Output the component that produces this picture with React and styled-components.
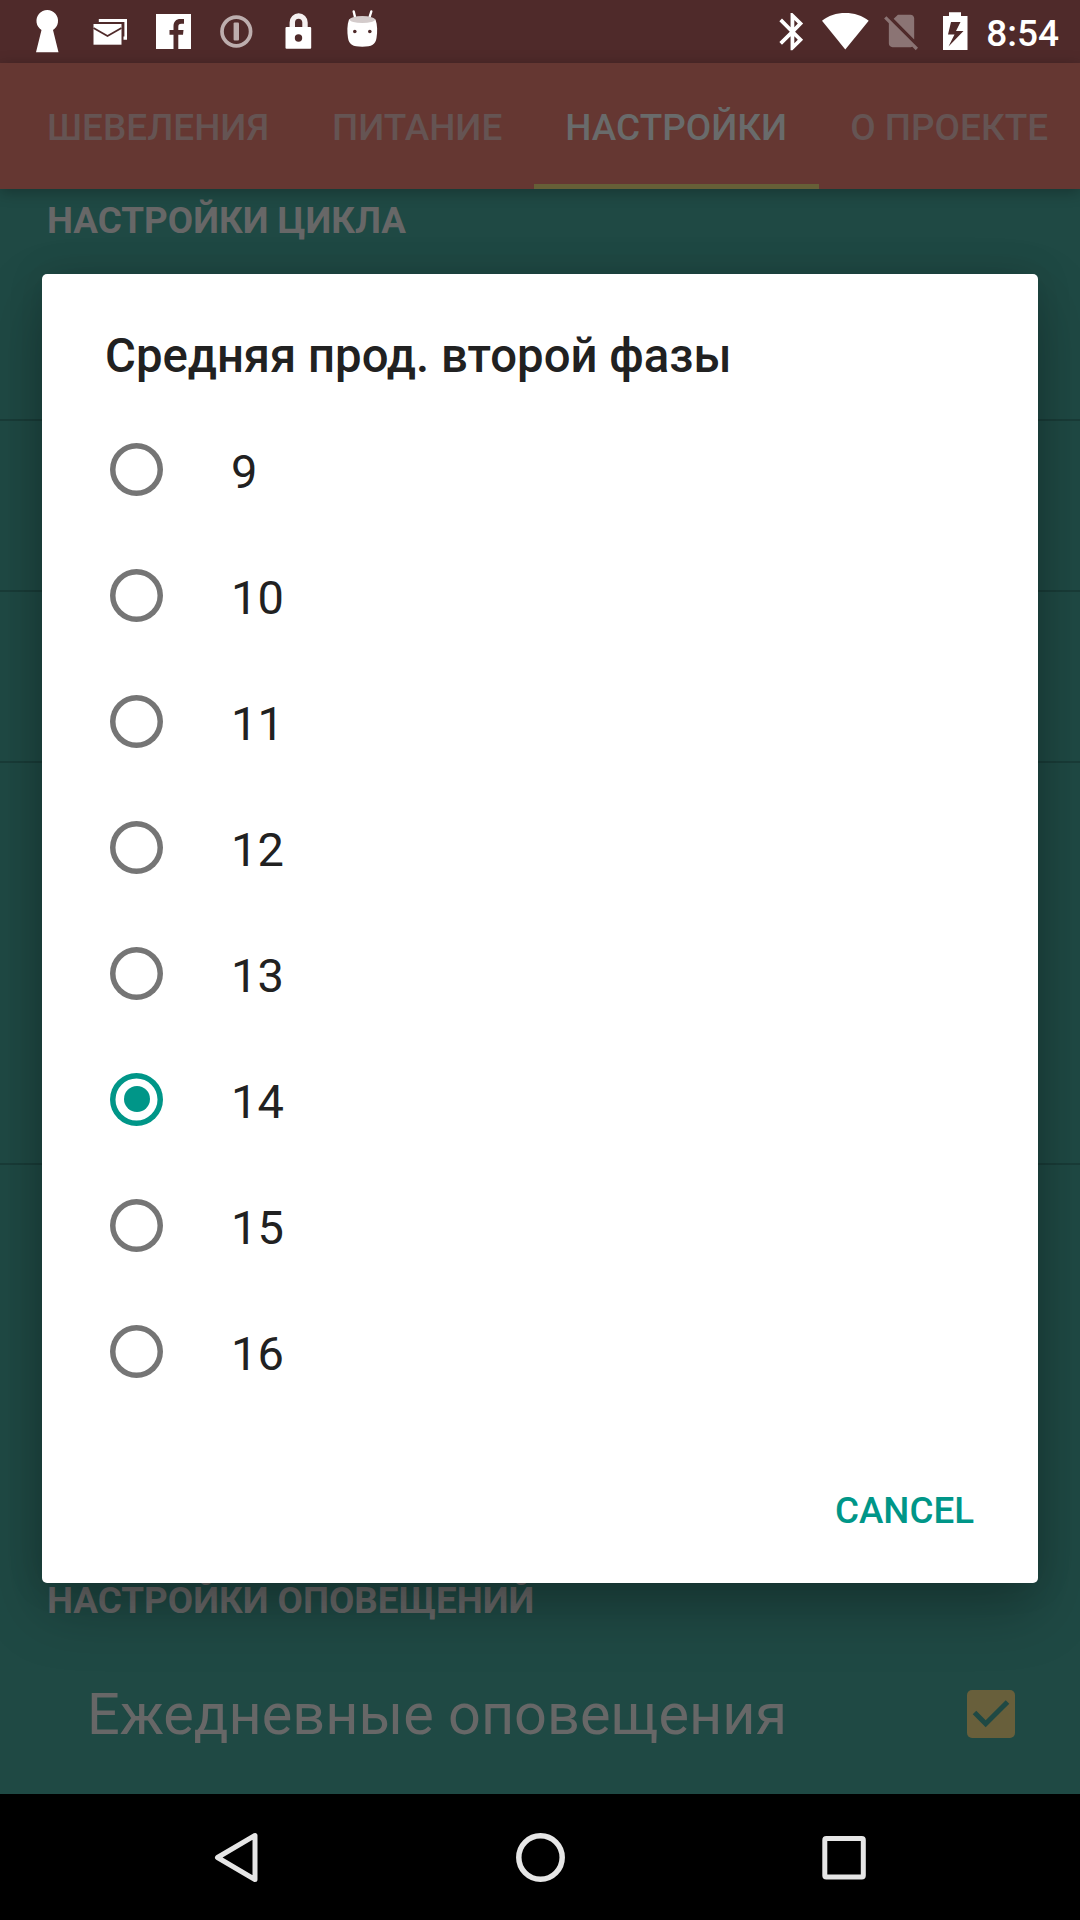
import React from "react";
import styled, { createGlobalStyle } from "styled-components";

const GlobalStyle = createGlobalStyle`
  * { box-sizing: border-box; }
  html, body { margin: 0; padding: 0; background: #000; }
  button { font: inherit; border: 0; background: none; padding: 0; }
`;

const Screen = styled.div`
  position: relative;
  display: flex;
  flex-direction: column;
  width: 1080px;
  height: 1920px;
  overflow: hidden;
  font-family: Roboto, "Noto Sans", sans-serif;
  background: #1f4944;
`;

const StatusBar = styled.header`
  flex: none;
  display: flex;
  align-items: center;
  justify-content: space-between;
  height: 63px;
  padding: 0 21px 0 16px;
  background: #4f2a2a;
  color: #fff;
`;

const StatusGroup = styled.div`
  display: flex;
  align-items: center;
`;

const Glyph = styled.svg`
  display: block;
  flex: none;
  width: ${(p) => p.$w}px;
  height: 63px;
`;

const Clock = styled.span`
  margin-left: 16px;
  font-size: 37px;
  line-height: 63px;
  font-weight: 500;
  padding-top: 3px;
`;

const TabBar = styled.nav`
  flex: none;
  position: relative;
  z-index: 1;
  display: flex;
  height: 126px;
  padding-left: 15.5px;
  background: #653732;
  box-shadow: 0 3px 14px rgba(0, 0, 0, 0.28);
`;

const Tab = styled.div`
  flex: none;
  display: flex;
  align-items: center;
  justify-content: center;
  padding: 7px 31.5px 0;
  border-bottom: 5px solid ${(p) => (p.$active ? "#665f37" : "transparent")};
  color: ${(p) => (p.$active ? "#696b6b" : "#655453")};
  font-size: 36.95px;
  font-weight: 500;
  white-space: nowrap;
`;

const Settings = styled.main`
  flex: 1;
  min-height: 0;
  display: flex;
  flex-direction: column;
`;

const SectionTitle = styled.h2`
  flex: none;
  height: ${(p) => p.$h}px;
  margin: 0;
  padding: ${(p) => p.$top}px 47px 0;
  font-size: 36.8px;
  line-height: 44px;
  font-weight: 700;
  color: #676767;
`;

const EmptyRow = styled.div`
  flex: none;
  height: ${(p) => p.$h}px;
  border-bottom: ${(p) => (p.$last ? 0 : 2)}px solid #193c38;
`;

const CheckRow = styled.div`
  flex: 1;
  display: flex;
  align-items: center;
  justify-content: space-between;
  padding: 0 65px 3px 87px;
  color: #676767;
  font-size: 57.6px;
  line-height: 68px;
`;

const CheckLabel = styled.span`
  padding-top: 3px;
`;

const NavBar = styled.footer`
  flex: none;
  display: flex;
  align-items: center;
  justify-content: center;
  gap: 240px;
  height: 126px;
  background: #000;
`;

const Overlay = styled.div`
  position: absolute;
  inset: 63px 0 126px;
  z-index: 2;
  display: flex;
  justify-content: center;
  align-items: flex-start;
  padding-top: 211.4px;
`;

const Dialog = styled.section`
  display: flex;
  flex-direction: column;
  width: 996px;
  height: 1308.2px;
  border-radius: 5px;
  background: #fff;
  box-shadow: 0 26px 60px rgba(0, 0, 0, 0.26), 0 0 36px rgba(0, 0, 0, 0.12);
`;

const DialogTitle = styled.h1`
  flex: none;
  height: 132px;
  margin: 0;
  padding: 52px 63px 0;
  font-size: 47.3px;
  line-height: 60px;
  font-weight: 500;
  color: #212121;
`;

const Options = styled.ul`
  flex: 1;
  margin: 0;
  padding: 0;
  list-style: none;
`;

const Option = styled.li`
  display: flex;
  align-items: center;
  height: 126px;
  padding-left: 68px;
  gap: 68px;
  color: #212121;
  font-size: 47px;
`;

const Radio = styled.span`
  display: grid;
  place-items: center;
  width: 53px;
  height: 53px;
  box-shadow: inset 0 0 0 5.5px ${(p) => (p.$on ? "#009688" : "#757575")};
  border-radius: 50%;
  &::after {
    content: "";
    width: 26px;
    height: 26px;
    border-radius: 50%;
    background: ${(p) => (p.$on ? "#009688" : "transparent")};
  }
`;

const OptionLabel = styled.span`
  padding-top: 4px;
`;

const Actions = styled.div`
  flex: none;
  display: flex;
  justify-content: flex-end;
  height: 136px;
  padding: 42px 64px 0;
`;

const CancelButton = styled.button`
  height: 44px;
  color: #009688;
  font-size: 36.75px;
  line-height: 44px;
  font-weight: 500;
`;

const tabs = ["ШЕВЕЛЕНИЯ", "ПИТАНИЕ", "НАСТРОЙКИ", "О ПРОЕКТЕ"];
const options = [9, 10, 11, 12, 13, 14, 15, 16];
const selected = 14;

function Icon({ w = 63, children }) {
  return (
    <Glyph $w={w} viewBox={`0 0 ${w} 63`} fill="#fff">
      {children}
    </Glyph>
  );
}

function Notifications() {
  return (
    <StatusGroup>
      <Icon>
        <path d="M20 52.200 25.500 30A10.800 10.800 0 1 1 37 30L42.500 52.200Z" />
      </Icon>
      <Icon>
        <path d="M19.800 22V19.100H48V39.800H44.500V36.500H45.400V22Z" />
        <path d="M14.500 24H42.500V44.700H14.500Z" />
        <path d="M14.500 28 28.500 36 42.500 28" fill="none" stroke="#4f2a2a" strokeWidth="1.800" />
      </Icon>
      <Icon>
        <path d="M14 14H49V49H14Z" />
        <path
          fill="#4f2a2a"
          d="M31.500 49V34.800H27.500V30H31.500V26.500C31.500 21.500 34 19 38.500 19H42V23.800H39.500C37 23.800 36.300 25 36.300 27V30H41.500L41 34.800H36.300V49Z"
        />
      </Icon>
      <Icon>
        <circle cx="31.300" cy="31.500" r="14.300" fill="none" stroke="#bdaeae" strokeWidth="3.700" />
        <rect x="28.600" y="22.500" width="5.400" height="18" rx="1" fill="#bdaeae" />
      </Icon>
      <Icon>
        <path d="M24.300 28V22.500A6.300 6.500 0 0 1 37 22.500V28" fill="none" stroke="#f5f0f0" strokeWidth="5.400" />
        <rect x="17.500" y="27" width="25.700" height="21.700" rx="1" />
        <circle cx="30.500" cy="38" r="3.700" fill="#4f2a2a" />
      </Icon>
      <Icon>
        <path d="M22.700 11.500 24.500 19M40.300 11.500 38 19" stroke="#fff" strokeWidth="2.400" strokeLinecap="round" />
        <path d="M18 19.500C23 16 39.500 16 44.500 19.500 46.500 25 46.500 32 45.500 38 44.500 44.500 41 46.700 31.300 46.700S18 44.500 17 38C16 32 16 25 18 19.500Z" />
        <ellipse cx="31.300" cy="19.600" rx="12.800" ry="3.500" fill="#d3cbcb" />
        <circle cx="23.800" cy="31.500" r="1.800" fill="#4f2a2a" />
        <circle cx="38.800" cy="31.500" r="1.800" fill="#4f2a2a" />
      </Icon>
    </StatusGroup>
  );
}

function SystemStatus() {
  return (
    <StatusGroup>
      <Icon w={52}>
        <path
          transform="translate(0 9.200) scale(1.870)"
          d="M17.710 7.710 12 2h-1v7.590L6.410 5 5 6.410 10.590 12 5 17.590 6.410 19 11 14.410V22h1l5.710-5.710-4.300-4.290 4.300-4.290zM13 5.830l1.880 1.880L13 9.590V5.830zm1.880 10.460L13 18.170v-3.760l1.880 1.880z"
        />
      </Icon>
      <Icon w={48}>
        <path d="M0 20.800C12 10.300 34.500 10.300 46.700 20.800L23.300 49.500Z" />
      </Icon>
      <Icon w={64}>
        <path
          transform="translate(9.800 9.200) scale(1.810)"
          fill="#8b7474"
          d="M18.990 5c0-1.100-.890-2-1.990-2h-7L7.660 5.340 19 16.680 18.990 5zM3.650 3.880 2.380 5.150 5 7.770V19c0 1.100.9 2 2 2h10.010c.350 0 .670-.100.960-.260l1.880 1.880 1.270-1.270L3.650 3.880z"
        />
      </Icon>
      <Icon w={36}>
        <path
          fillRule="evenodd"
          d="M9 16H15V12.300H27V16H33.500V50H9ZM17 22 14 34.500H20.500L14.500 46.500 29.500 31H22L26.500 22Z"
        />
      </Icon>
      <Clock>8:54</Clock>
    </StatusGroup>
  );
}

export default function App() {
  return (
    <Screen>
      <GlobalStyle />
      <StatusBar>
        <Notifications />
        <SystemStatus />
      </StatusBar>
      <TabBar>
        {tabs.map((t) => (
          <Tab key={t} $active={t === "НАСТРОЙКИ"}>
            {t}
          </Tab>
        ))}
      </TabBar>
      <Settings>
        <SectionTitle $h={62} $top={10}>НАСТРОЙКИ ЦИКЛА</SectionTitle>
        <EmptyRow $h={170} />
        <EmptyRow $h={171} />
        <EmptyRow $h={171} />
        <EmptyRow $h={402} />
        <EmptyRow $h={403} $last />
        <SectionTitle $h={68} $top={11}>НАСТРОЙКИ ОПОВЕЩЕНИЙ</SectionTitle>
        <CheckRow>
          <CheckLabel>Ежедневные оповещения</CheckLabel>
          <svg width="48" height="48" viewBox="0 0 48 48">
            <rect width="48" height="48" rx="5" fill="#685f3b" />
            <path d="M7.500 22.500 18.700 33.700 40.500 12" fill="none" stroke="#1f4944" strokeWidth="5" />
          </svg>
        </CheckRow>
      </Settings>
      <NavBar>
        <svg width="63" height="63" viewBox="0 0 63 63" fill="none">
          <path d="M49 9.500V53.500L11.500 31.500Z" stroke="#e6e6e6" strokeWidth="5" strokeLinejoin="round" />
        </svg>
        <svg width="63" height="63" viewBox="0 0 63 63" fill="none">
          <circle cx="31.500" cy="31.500" r="21.700" stroke="#e6e6e6" strokeWidth="5.500" />
        </svg>
        <svg width="63" height="63" viewBox="0 0 63 63" fill="none">
          <rect x="12.800" y="12.500" width="38.500" height="38.500" rx="1.500" stroke="#e6e6e6" strokeWidth="5" />
        </svg>
      </NavBar>
      <Overlay>
        <Dialog role="dialog">
          <DialogTitle>Средняя прод. второй фазы</DialogTitle>
          <Options>
            {options.map((n) => (
              <Option key={n}>
                <Radio $on={n === selected} />
                <OptionLabel>{n}</OptionLabel>
              </Option>
            ))}
          </Options>
          <Actions>
            <CancelButton>CANCEL</CancelButton>
          </Actions>
        </Dialog>
      </Overlay>
    </Screen>
  );
}
